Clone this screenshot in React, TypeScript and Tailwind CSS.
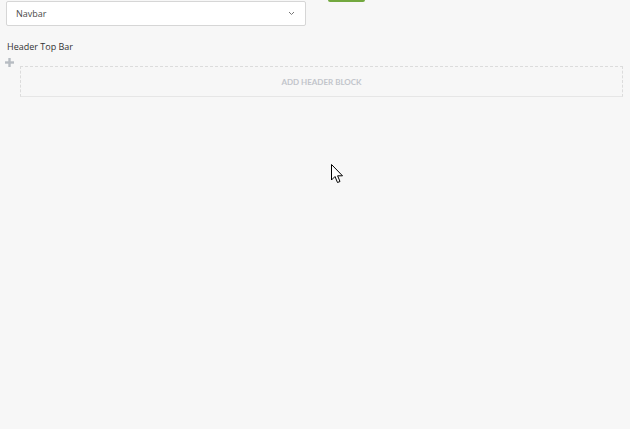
import React from "react";

const Cursor = () => (
  <svg width="13" height="20" viewBox="0 0 13 20" className="absolute left-[331px] top-[164px]">
    <path
      d="M0.5 0.5 L0.5 16 L4 12.5 L6.5 18.5 L9 17.5 L6.6 11.8 L11.5 11.8 Z"
      fill="#fff"
      stroke="#000"
      strokeWidth="1"
      strokeLinejoin="miter"
    />
  </svg>
);

export default function App() {
  return (
    <div
      className="relative w-[630px] h-[429px] bg-[#f7f7f7] overflow-hidden"
      style={{ fontFamily: '"Open Sans", "Noto Sans", sans-serif' }}
    >
      <div className="flex items-start">
        <div className="ml-[6px] mt-[1px] w-[300px] h-[25px] bg-white border border-[#d6d6d6] rounded-[2px] flex items-center justify-between pl-[9px] pr-[10px]">
          <span className="text-[9px] text-[#4a4a4a]">Navbar</span>
          <svg width="7" height="5" viewBox="0 0 7 5">
            <path d="M1 1 L3.5 3.5 L6 1" fill="none" stroke="#777" strokeWidth="1" />
          </svg>
        </div>
        <div className="ml-[22px] w-[37px] h-[2px] bg-[#73a83f] rounded-b-[3px]" />
      </div>

      <div className="mt-[15px] ml-[7px] text-[9px] leading-[12px] text-[#333]">Header Top Bar</div>

      <div className="mt-[4px] flex items-start">
        <svg width="9" height="9" viewBox="0 0 9 9" className="ml-[5px] mt-[1px]">
          <rect x="3.3" y="0" width="2.4" height="9" fill="#b7bcc2" />
          <rect x="0" y="3.3" width="9" height="2.4" fill="#b7bcc2" />
        </svg>
        <div className="ml-[6px] mt-[9px] w-[603px] h-[31px] border border-dashed border-[#dcdcdc] [border-bottom-style:solid] border-b-[#e6e6e6] flex items-center justify-center">
          <span
            className="text-[8px] font-bold text-[#c2c5cb]"
            style={{ fontFamily: 'Lato, "Open Sans", sans-serif' }}
          >
            ADD HEADER BLOCK
          </span>
        </div>
      </div>

      <Cursor />
    </div>
  );
}
